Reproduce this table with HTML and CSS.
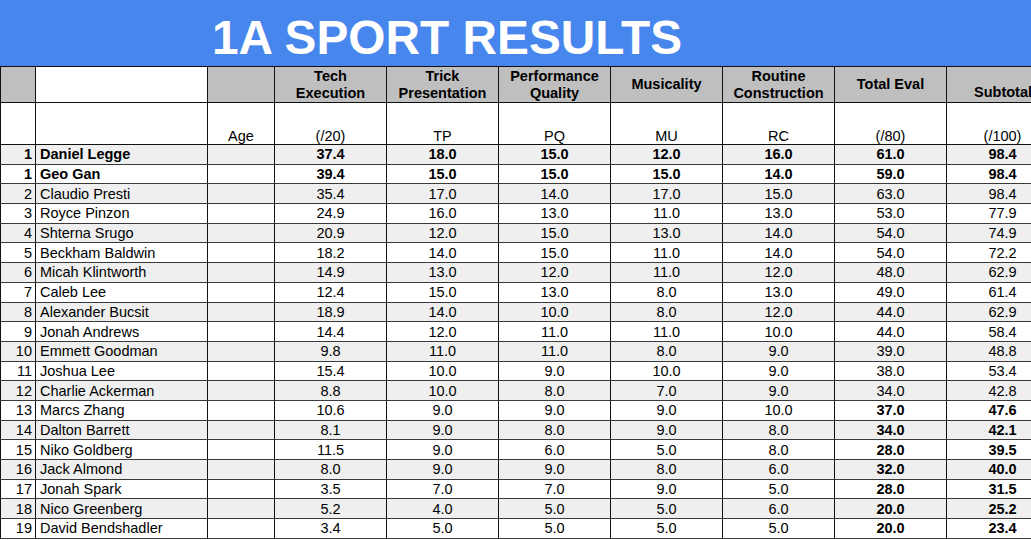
FILE: index.html
```html
<!DOCTYPE html>
<html>
<head>
<meta charset="utf-8">
<link rel="stylesheet" href="styles.css">
</head>
<body>
<div class="banner"><h1 class="title">1A SPORT RESULTS</h1></div>
<table class="sheet">
<colgroup>
<col class="c-rank"><col class="c-name"><col class="c-age">
<col class="c-num"><col class="c-num"><col class="c-num"><col class="c-num"><col class="c-num"><col class="c-num"><col class="c-num">
</colgroup>
<thead>
<tr class="h1">
<th class="gray"></th><th class="white"></th><th class="gray"></th>
<th class="gray">Tech<br>Execution</th>
<th class="gray">Trick<br>Presentation</th>
<th class="gray">Performance<br>Quality</th>
<th class="gray">Musicality</th>
<th class="gray">Routine<br>Construction</th>
<th class="gray">Total Eval</th>
<th class="gray low">Subtotal</th>
</tr>
<tr class="h2">
<td></td><td></td><td>Age</td><td>(/20)</td><td>TP</td><td>PQ</td><td>MU</td><td>RC</td><td>(/80)</td><td>(/100)</td>
</tr>
</thead>
<tbody>
<tr class="b"><td class="rk">1</td><td class="nm">Daniel Legge</td><td></td><td>37.4</td><td>18.0</td><td>15.0</td><td>12.0</td><td>16.0</td><td>61.0</td><td>98.4</td></tr>
<tr class="b"><td class="rk">1</td><td class="nm">Geo Gan</td><td></td><td>39.4</td><td>15.0</td><td>15.0</td><td>15.0</td><td>14.0</td><td>59.0</td><td>98.4</td></tr>
<tr><td class="rk">2</td><td class="nm">Claudio Presti</td><td></td><td>35.4</td><td>17.0</td><td>14.0</td><td>17.0</td><td>15.0</td><td>63.0</td><td>98.4</td></tr>
<tr><td class="rk">3</td><td class="nm">Royce Pinzon</td><td></td><td>24.9</td><td>16.0</td><td>13.0</td><td>11.0</td><td>13.0</td><td>53.0</td><td>77.9</td></tr>
<tr><td class="rk">4</td><td class="nm">Shterna Srugo</td><td></td><td>20.9</td><td>12.0</td><td>15.0</td><td>13.0</td><td>14.0</td><td>54.0</td><td>74.9</td></tr>
<tr><td class="rk">5</td><td class="nm">Beckham Baldwin</td><td></td><td>18.2</td><td>14.0</td><td>15.0</td><td>11.0</td><td>14.0</td><td>54.0</td><td>72.2</td></tr>
<tr><td class="rk">6</td><td class="nm">Micah Klintworth</td><td></td><td>14.9</td><td>13.0</td><td>12.0</td><td>11.0</td><td>12.0</td><td>48.0</td><td>62.9</td></tr>
<tr><td class="rk">7</td><td class="nm">Caleb Lee</td><td></td><td>12.4</td><td>15.0</td><td>13.0</td><td>8.0</td><td>13.0</td><td>49.0</td><td>61.4</td></tr>
<tr><td class="rk">8</td><td class="nm">Alexander Bucsit</td><td></td><td>18.9</td><td>14.0</td><td>10.0</td><td>8.0</td><td>12.0</td><td>44.0</td><td>62.9</td></tr>
<tr><td class="rk">9</td><td class="nm">Jonah Andrews</td><td></td><td>14.4</td><td>12.0</td><td>11.0</td><td>11.0</td><td>10.0</td><td>44.0</td><td>58.4</td></tr>
<tr><td class="rk">10</td><td class="nm">Emmett Goodman</td><td></td><td>9.8</td><td>11.0</td><td>11.0</td><td>8.0</td><td>9.0</td><td>39.0</td><td>48.8</td></tr>
<tr><td class="rk">11</td><td class="nm">Joshua Lee</td><td></td><td>15.4</td><td>10.0</td><td>9.0</td><td>10.0</td><td>9.0</td><td>38.0</td><td>53.4</td></tr>
<tr><td class="rk">12</td><td class="nm">Charlie Ackerman</td><td></td><td>8.8</td><td>10.0</td><td>8.0</td><td>7.0</td><td>9.0</td><td>34.0</td><td>42.8</td></tr>
<tr class="bt"><td class="rk">13</td><td class="nm">Marcs Zhang</td><td></td><td>10.6</td><td>9.0</td><td>9.0</td><td>9.0</td><td>10.0</td><td>37.0</td><td>47.6</td></tr>
<tr class="bt"><td class="rk">14</td><td class="nm">Dalton Barrett</td><td></td><td>8.1</td><td>9.0</td><td>8.0</td><td>9.0</td><td>8.0</td><td>34.0</td><td>42.1</td></tr>
<tr class="bt"><td class="rk">15</td><td class="nm">Niko Goldberg</td><td></td><td>11.5</td><td>9.0</td><td>6.0</td><td>5.0</td><td>8.0</td><td>28.0</td><td>39.5</td></tr>
<tr class="bt"><td class="rk">16</td><td class="nm">Jack Almond</td><td></td><td>8.0</td><td>9.0</td><td>9.0</td><td>8.0</td><td>6.0</td><td>32.0</td><td>40.0</td></tr>
<tr class="bt"><td class="rk">17</td><td class="nm">Jonah Spark</td><td></td><td>3.5</td><td>7.0</td><td>7.0</td><td>9.0</td><td>5.0</td><td>28.0</td><td>31.5</td></tr>
<tr class="bt"><td class="rk">18</td><td class="nm">Nico Greenberg</td><td></td><td>5.2</td><td>4.0</td><td>5.0</td><td>5.0</td><td>6.0</td><td>20.0</td><td>25.2</td></tr>
<tr class="bt"><td class="rk">19</td><td class="nm">David Bendshadler</td><td></td><td>3.4</td><td>5.0</td><td>5.0</td><td>5.0</td><td>5.0</td><td>20.0</td><td>23.4</td></tr>
</tbody>
</table>
</body>
</html>
```
FILE: styles.css
```css
html, body {
  margin: 0;
  padding: 0;
  overflow: hidden;
  background: #ffffff;
  width: 1031px;
  height: 540px;
}
body {
  font-family: "Liberation Sans", Arial, sans-serif;
  color: #000;
}
.banner {
  height: 66px;
  background: #4786ec;
  box-sizing: border-box;
  padding: 14px 0 0 212px;
}
.title {
  margin: 0;
  font-size: 47.8px;
  line-height: 47px;
  font-weight: bold;
  color: #ffffff;
  white-space: nowrap;
}
.sheet {
  border-collapse: collapse;
  table-layout: fixed;
  width: 1058px;
  font-size: 14.5px;
}
.c-rank { width: 35px; }
.c-name { width: 172px; }
.c-age { width: 67px; }
.c-num { width: 112px; }
.sheet th, .sheet td {
  border-left: 1px solid #111;
  border-right: 1px solid #111;
  border-top: 1px solid #3a3a3a;
  border-bottom: 1px solid #3a3a3a;
  padding: 0;
  text-align: center;
  white-space: nowrap;
  overflow: hidden;
}
.h1 th {
  height: 34px;
  font-weight: bold;
  line-height: 17px;
  border-top: 1px solid #111;
  border-bottom: 1px solid #111;
}
.h1 th.gray { background: #bfbfbf; }
.h1 th.white { background: #ffffff; }
.h1 th.low { vertical-align: bottom; padding-bottom: 1px; text-align: left; padding-left: 27px; }
.h2 td {
  height: 41px;
  vertical-align: bottom;
  padding-bottom: 0;
  line-height: 15px;
  border-bottom: 1px solid #111;
}
tbody td {
  height: 18.7px;
  line-height: 18px;
}
tbody tr:nth-child(odd) td { background: #efefef; }
tbody tr:nth-child(even) td { background: #ffffff; }
td.rk { text-align: right; padding-right: 3px; }
td.nm { text-align: left; padding-left: 4px; }
tr.b td { font-weight: bold; }
tr.bt td:nth-child(9), tr.bt td:nth-child(10) { font-weight: bold; }
```
